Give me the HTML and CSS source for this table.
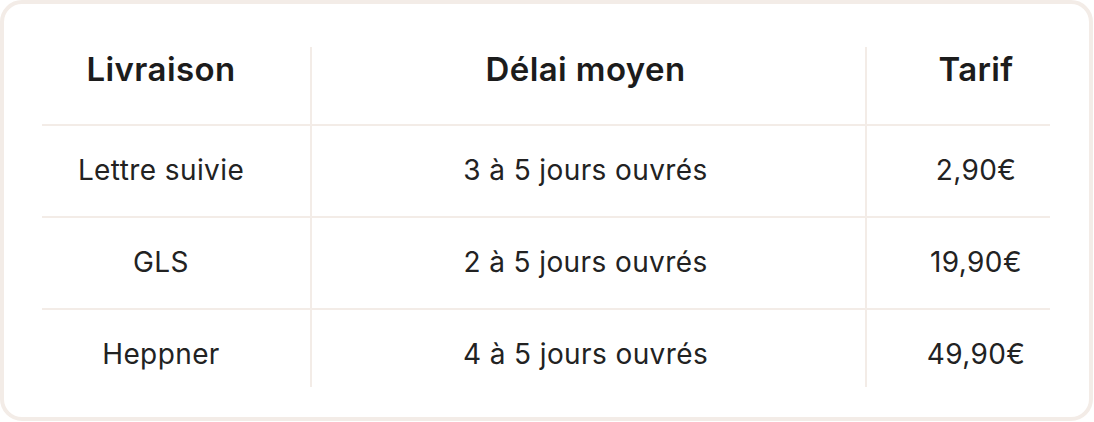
FILE: index.html
```html
<!DOCTYPE html>
<html lang="fr">
<head>
<meta charset="utf-8">
<link rel="stylesheet" href="styles.css">
</head>
<body>
<div class="card">
  <div class="table">
    <div class="row head">
      <div class="cell c1">Livraison</div>
      <div class="cell c2">Délai moyen</div>
      <div class="cell c3">Tarif</div>
    </div>
    <div class="row body">
      <div class="cell c1">Lettre suivie</div>
      <div class="cell c2">3 à 5 jours ouvrés</div>
      <div class="cell c3">2,90€</div>
    </div>
    <div class="row body">
      <div class="cell c1">GLS</div>
      <div class="cell c2">2 à 5 jours ouvrés</div>
      <div class="cell c3">19,90€</div>
    </div>
    <div class="row body last">
      <div class="cell c1">Heppner</div>
      <div class="cell c2">4 à 5 jours ouvrés</div>
      <div class="cell c3">49,90€</div>
    </div>
  </div>
</div>
</body>
</html>
```
FILE: styles.css
```css
html, body {
  margin: 0;
  background: #ffffff;
}
.card {
  box-sizing: border-box;
  width: 1093px;
  height: 421px;
  border: 4px solid #f3ece7;
  border-radius: 22px;
  padding: 43px 39px 0 38px;
  font-family: Inter, "Noto Sans", sans-serif;
  color: #222222;
}
.table {
  width: 1008px;
  display: flex;
  flex-direction: column;
}
.row {
  display: grid;
  grid-template-columns: 268px 555px 185px;
  border-bottom: 2px solid #f3ece7;
}
.row.last {
  border-bottom: none;
}
.cell {
  box-sizing: border-box;
  text-align: center;
  white-space: nowrap;
}
.c2, .c3 {
  border-left: 2px solid #f3ece7;
}
.c1 { padding-right: 30px; }
.c2 { padding-right: 6px; }
.c3 { padding-left: 35px; }

.head .cell {
  height: 77px;
  padding-top: 4px;
  font-size: 33px;
  line-height: 36px;
  font-weight: 600;
  letter-spacing: 0.4px;
  color: #1c1c1c;
}
.body .cell {
  height: 90px;
  padding-top: 28px;
  font-size: 28px;
  line-height: 32px;
  font-weight: 400;
  letter-spacing: 0.4px;
}
.last .cell {
  height: 77px;
}
```
